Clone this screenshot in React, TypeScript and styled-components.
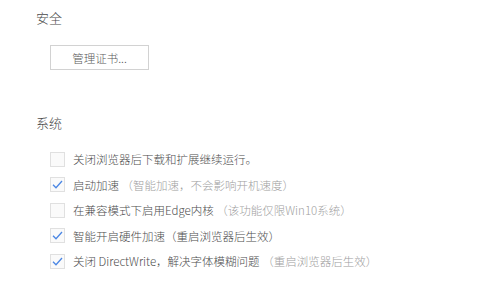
import React from 'react';
import styled, { createGlobalStyle } from 'styled-components';

const FONT = '"Noto Sans CJK SC", "Noto Sans", "Microsoft YaHei", sans-serif';

const GlobalStyle = createGlobalStyle`
  html, body {
    margin: 0;
    padding: 0;
    background: #ffffff;
  }
  body {
    font-family: ${FONT};
  }
`;

const Page = styled.div`
  width: 488px;
  height: 286px;
  padding: 8px 0 0 36px;
  box-sizing: border-box;
  overflow: hidden;
`;

const SectionTitle = styled.div<{ $top?: number }>`
  margin-top: ${(p) => p.$top ?? 0}px;
  font-size: 13px;
  line-height: 20px;
  font-weight: 300;
  color: #4a4a4a;
`;

const Button = styled.button`
  display: flex;
  align-items: center;
  justify-content: center;
  margin: 17px 0 0 14px;
  width: 99px;
  height: 25px;
  padding: 0;
  border: 1px solid #d2d2d2;
  background: #ffffff;
  font-family: ${FONT};
  font-size: 11.5px;
  font-weight: 300;
  color: #5a5a5a;
`;

const List = styled.div`
  display: flex;
  flex-direction: column;
  margin: 13.5px 0 0 14px;
`;

const Row = styled.label`
  display: flex;
  align-items: center;
  gap: 8px;
  height: 25.5px;
  font-size: 11.5px;
  font-weight: 300;
  color: #4d4d4d;
  white-space: nowrap;
`;

const Box = styled.span`
  display: flex;
  align-items: center;
  justify-content: center;
  width: 15px;
  height: 15px;
  box-sizing: border-box;
  border: 1px solid #e0e0e0;
  background: #fafafa;
  flex: none;
`;

const Hint = styled.span`
  color: #a0a0a0;
`;

type Item = { label: string; hint?: string; checked: boolean };

const items: Item[] = [
  { label: '关闭浏览器后下载和扩展继续运行。', checked: false },
  { label: '启动加速', hint: '（智能加速，不会影响开机速度）', checked: true },
  { label: '在兼容模式下启用Edge内核', hint: '（该功能仅限Win10系统）', checked: false },
  { label: '智能开启硬件加速（重启浏览器后生效）', checked: true },
  { label: '关闭 DirectWrite，解决字体模糊问题', hint: '（重启浏览器后生效）', checked: true },
];

const Check = () => (
  <svg width="13" height="13" viewBox="0 0 13 13">
    <path d="M2 6.8 L5 9.8 L11 3" fill="none" stroke="#4a86e4" strokeWidth="1.3" />
  </svg>
);

export default function App() {
  return (
    <Page>
      <GlobalStyle />
      <SectionTitle>安全</SectionTitle>
      <Button>管理证书...</Button>
      <SectionTitle $top={43}>系统</SectionTitle>
      <List>
        {items.map((it) => (
          <Row key={it.label}>
            <Box>{it.checked && <Check />}</Box>
            <span>
              {it.label}
              {it.hint && <Hint> {it.hint}</Hint>}
            </span>
          </Row>
        ))}
      </List>
    </Page>
  );
}
